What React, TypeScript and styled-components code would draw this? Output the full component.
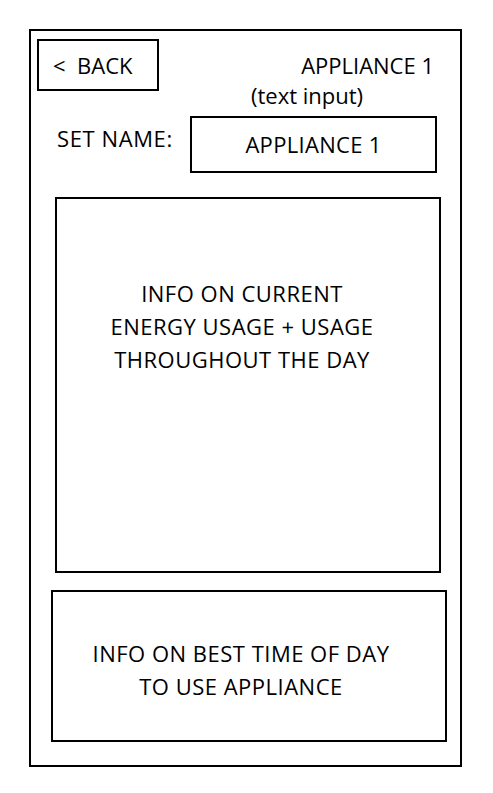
import React from "react";
import styled, { createGlobalStyle } from "styled-components";

const GlobalStyle = createGlobalStyle`
  html, body {
    margin: 0;
    padding: 0;
    background: #ffffff;
  }
  body {
    font-family: "Open Sans", "Noto Sans", "Liberation Sans", sans-serif;
    color: #000000;
  }
  * {
    box-sizing: border-box;
  }
`;

const Page = styled.div`
  padding: 29px 0 0 29px;
`;

const PhoneFrame = styled.div`
  width: 433px;
  height: 738px;
  border: 2px solid #000;
  display: flex;
  flex-direction: column;
`;

const Header = styled.header`
  display: flex;
  align-items: flex-start;
  padding: 8px 26px 0 6px;
`;

const BackButton = styled.button`
  width: 122px;
  height: 52px;
  border: 2px solid #000;
  background: #fff;
  display: flex;
  align-items: center;
  padding: 0 0 0 14px;
  font-family: inherit;
  font-size: 22px;
  line-height: 30px;
  color: #000;
  white-space: pre;
  cursor: pointer;
`;

const TitleBlock = styled.div`
  flex: 1;
  display: flex;
  flex-direction: column;
  margin-top: 11px;
`;

const Title = styled.h1`
  margin: 0;
  font-weight: 400;
  font-size: 22px;
  line-height: 30px;
  text-align: right;
`;

const Note = styled.div`
  font-size: 22px;
  line-height: 30px;
  margin-left: 92px;
`;

const NameRow = styled.div`
  display: flex;
  align-items: flex-start;
  margin-top: 6px;
  padding: 0 23px 0 26px;
`;

const Label = styled.label`
  font-size: 22px;
  line-height: 30px;
  margin-top: 7px;
  letter-spacing: 0.6px;
`;

const NameInput = styled.div`
  margin-left: auto;
  width: 247px;
  height: 57px;
  border: 2px solid #000;
  display: flex;
  align-items: center;
  justify-content: center;
  padding-bottom: 1px;
  font-size: 22px;
  line-height: 30px;
  letter-spacing: 0.3px;
`;

const InfoBox = styled.section<{ $left: number; $top: number; $width: number; $height: number; $padTop: number; $padRight: number }>`
  margin-left: ${(p) => p.$left}px;
  margin-top: ${(p) => p.$top}px;
  width: ${(p) => p.$width}px;
  height: ${(p) => p.$height}px;
  border: 2px solid #000;
  padding: ${(p) => p.$padTop}px ${(p) => p.$padRight}px 0 0;
  text-align: center;
  font-size: 22px;
  line-height: 33px;
  letter-spacing: 0.5px;
`;

const Line = styled.div`
  white-space: nowrap;
`;

export default function App() {
  return (
    <>
      <GlobalStyle />
      <Page>
        <PhoneFrame>
          <Header>
            <BackButton>{"<  BACK"}</BackButton>
            <TitleBlock>
              <Title>APPLIANCE 1</Title>
              <Note>(text input)</Note>
            </TitleBlock>
          </Header>
          <NameRow>
            <Label>SET NAME:</Label>
            <NameInput>APPLIANCE 1</NameInput>
          </NameRow>
          <InfoBox $left={24} $top={24} $width={386} $height={376} $padTop={78} $padRight={12}>
            <Line>INFO ON CURRENT</Line>
            <Line>ENERGY USAGE + USAGE</Line>
            <Line>THROUGHOUT THE DAY</Line>
          </InfoBox>
          <InfoBox $left={20} $top={17} $width={396} $height={152} $padTop={45} $padRight={16}>
            <Line>INFO ON BEST TIME OF DAY</Line>
            <Line>TO USE APPLIANCE</Line>
          </InfoBox>
        </PhoneFrame>
      </Page>
    </>
  );
}
